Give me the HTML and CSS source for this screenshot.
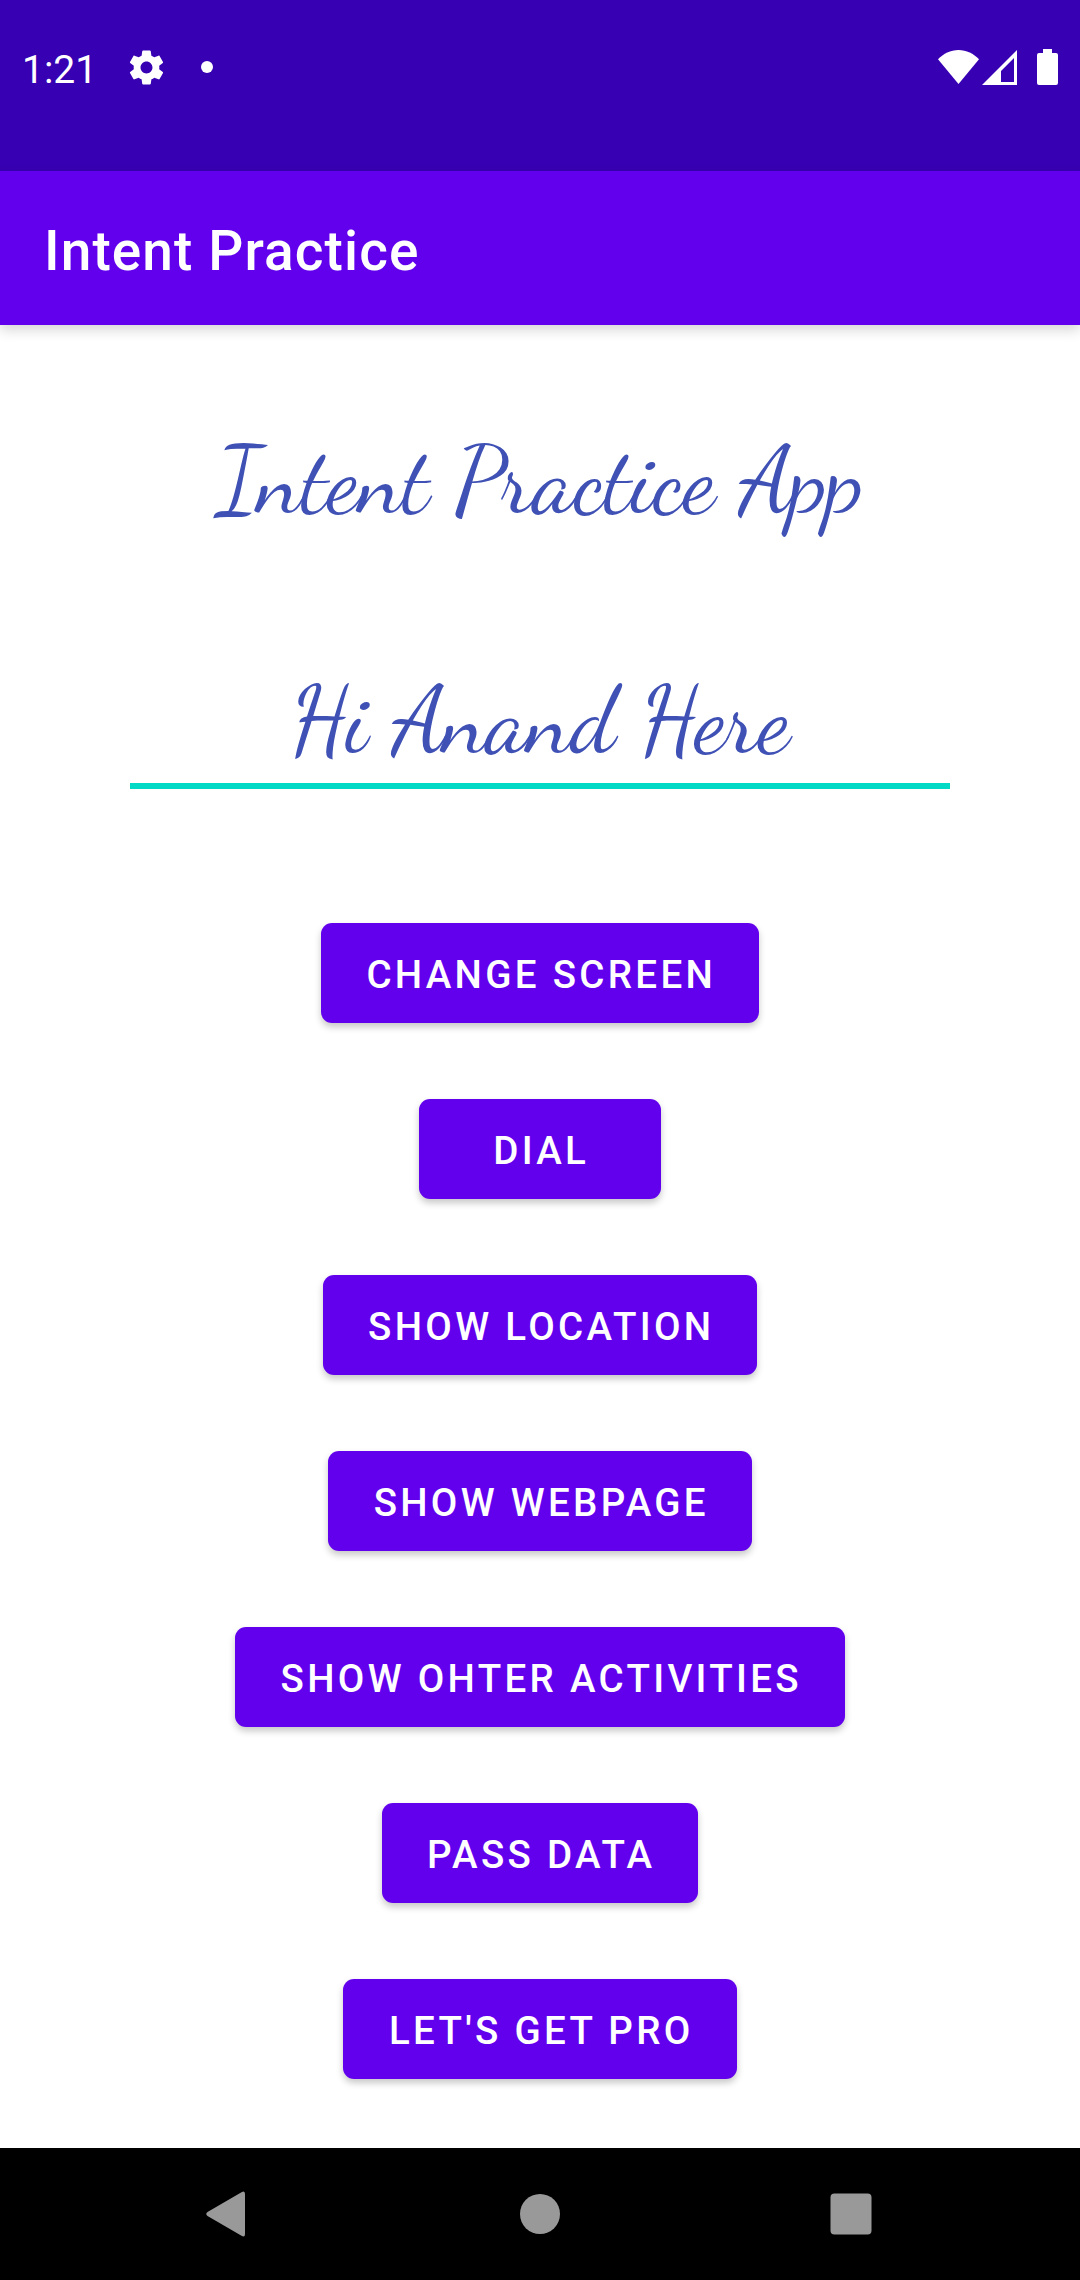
FILE: index.html
```html
<!DOCTYPE html>
<html lang="en">
<head>
<meta charset="utf-8">
<title>Intent Practice</title>
<link rel="stylesheet" href="styles.css">
</head>
<body>
<div class="screen">
  <header class="status-bar">
    <div class="status-group">
      <span class="clock">1:21</span>
      <svg class="gear" viewBox="0 0 24 24"><path d="M19.43 12.98c.04-.32.07-.64.07-.98s-.03-.66-.07-.98l2.11-1.65c.19-.15.24-.42.12-.64l-2-3.46c-.12-.22-.39-.3-.61-.22l-2.49 1c-.52-.4-1.08-.73-1.69-.98l-.38-2.65C14.46 2.18 14.25 2 14 2h-4c-.25 0-.46.18-.49.42l-.38 2.65c-.61.25-1.17.59-1.69.98l-2.49-1c-.23-.09-.49 0-.61.22l-2 3.46c-.13.22-.07.49.12.64l2.11 1.65c-.04.32-.07.65-.07.98s.03.66.07.98l-2.11 1.65c-.19.15-.24.42-.12.64l2 3.46c.12.22.39.3.61.22l2.49-1c.52.4 1.08.73 1.69.98l.38 2.65c.03.24.24.42.49.42h4c.25 0 .46-.18.49-.42l.38-2.65c.61-.25 1.17-.59 1.69-.98l2.49 1c.23.09.49 0 .61-.22l2-3.46c.12-.22.07-.49-.12-.64l-2.11-1.65zM12 15.5c-1.93 0-3.5-1.57-3.5-3.5s1.57-3.5 3.5-3.5 3.5 1.57 3.5 3.5-1.57 3.5-3.5 3.5z"/></svg>
      <span class="dot"></span>
    </div>
    <div class="status-group">
      <svg class="wifi" viewBox="0 0 41 34"><path d="M20.5 34 0 9.3C5.500 3.500 12.500 0 20.500 0S35.500 3.500 41 9.300z"/></svg>
      <svg class="signal" viewBox="0 0 35 35"><path fill-rule="evenodd" d="M35 0v35H0zM32 8 19 21v11h13z"/></svg>
      <svg class="battery" viewBox="0 0 21 36"><path d="M6 0h9v4h4q2 0 2 2v28q0 2-2 2H2q-2 0-2-2V6q0-2 2-2h4z"/></svg>
    </div>
  </header>
  <div class="app-bar"><h1 class="app-title">Intent Practice</h1></div>
  <main class="content">
    <h2 class="script heading">Intent Practice App</h2>
    <div class="field"><span class="script">Hi Anand Here</span></div>
    <div class="actions">
      <button class="btn">CHANGE SCREEN</button>
      <button class="btn">DIAL</button>
      <button class="btn">SHOW LOCATION</button>
      <button class="btn">SHOW WEBPAGE</button>
      <button class="btn">SHOW OHTER ACTIVITIES</button>
      <button class="btn">PASS DATA</button>
      <button class="btn">LET'S GET PRO</button>
    </div>
  </main>
  <nav class="nav-bar">
    <svg class="nav-icon" viewBox="0 0 46 46"><path d="M38.500 1.200Q42 -1 42 3V43Q42 47 38.500 44.800L4.500 25Q2 23 4.500 21z"/></svg>
    <svg class="nav-icon" viewBox="0 0 46 46"><circle cx="24" cy="23" r="20"/></svg>
    <svg class="nav-icon" viewBox="0 0 46 46"><rect x="2.500" y="2.500" width="41" height="41" rx="4"/></svg>
  </nav>
</div>
</body>
</html>
```
FILE: styles.css
```css
* { box-sizing: border-box; }

body {
  margin: 0;
  background: #fff;
  font-family: Roboto, "Liberation Sans", sans-serif;
}

.screen {
  display: flex;
  flex-direction: column;
  width: 1080px;
  height: 2280px;
  overflow: hidden;
}

.status-bar {
  display: flex;
  justify-content: space-between;
  height: 171px;
  padding: 0 22px;
  background: #3700b3;
  color: #fff;
}

.status-group {
  display: flex;
  align-items: center;
  height: 134px;
}

.status-group svg { fill: #fff; }

.clock {
  width: 104px;
  font-size: 39px;
  line-height: 46px;
  padding-top: 5px;
}

.gear { width: 41px; height: 41px; }

.dot {
  width: 12px;
  height: 12px;
  margin-left: 34px;
  border-radius: 50%;
  background: #fff;
}

.wifi { width: 41px; height: 34px; margin-right: 3px; }
.signal { width: 35px; height: 35px; margin-right: 20px; }
.battery { width: 21px; height: 36px; }

.app-bar {
  position: relative;
  display: flex;
  align-items: center;
  height: 154px;
  padding: 6px 44px 0;
  background: #6200ee;
  box-shadow: 0 5px 12px rgba(0, 0, 0, 0.16);
}

.app-title {
  margin: 0;
  color: #fff;
  font-size: 55px;
  font-weight: 500;
  letter-spacing: 0.02em;
}

.content {
  display: flex;
  flex: 1;
  flex-direction: column;
  align-items: center;
}

.script {
  color: #3f51b5;
  font-family: "Dancing Script", "Liberation Serif", cursive;
  font-size: 93.5px;
  font-weight: 400;
  line-height: 114px;
  white-space: nowrap;
}

.heading {
  margin: 99px 0 0;
}

.field {
  display: flex;
  justify-content: center;
  width: 820px;
  height: 143px;
  margin: 108px 0 134px;
  padding-top: 18px;
  border-bottom: 6px solid #03dac5;
}

.actions {
  display: flex;
  flex-direction: column;
  align-items: center;
  gap: 76px;
}

.btn {
  min-width: 242px;
  height: 100px;
  padding: 2px 43px 0 45.5px;
  border: 0;
  border-radius: 11px;
  background: #6200ee;
  box-shadow: 0 4px 7px rgba(0, 0, 0, 0.22);
  color: #fff;
  font: 500 38.5px Roboto, "Liberation Sans", sans-serif;
  letter-spacing: 0.086em;
  white-space: nowrap;
}

.nav-bar {
  display: flex;
  align-items: center;
  justify-content: space-between;
  height: 132px;
  padding: 0 206px 0 203px;
  background: #000;
}

.nav-icon {
  width: 46px;
  height: 46px;
  fill: #999;
}
```
